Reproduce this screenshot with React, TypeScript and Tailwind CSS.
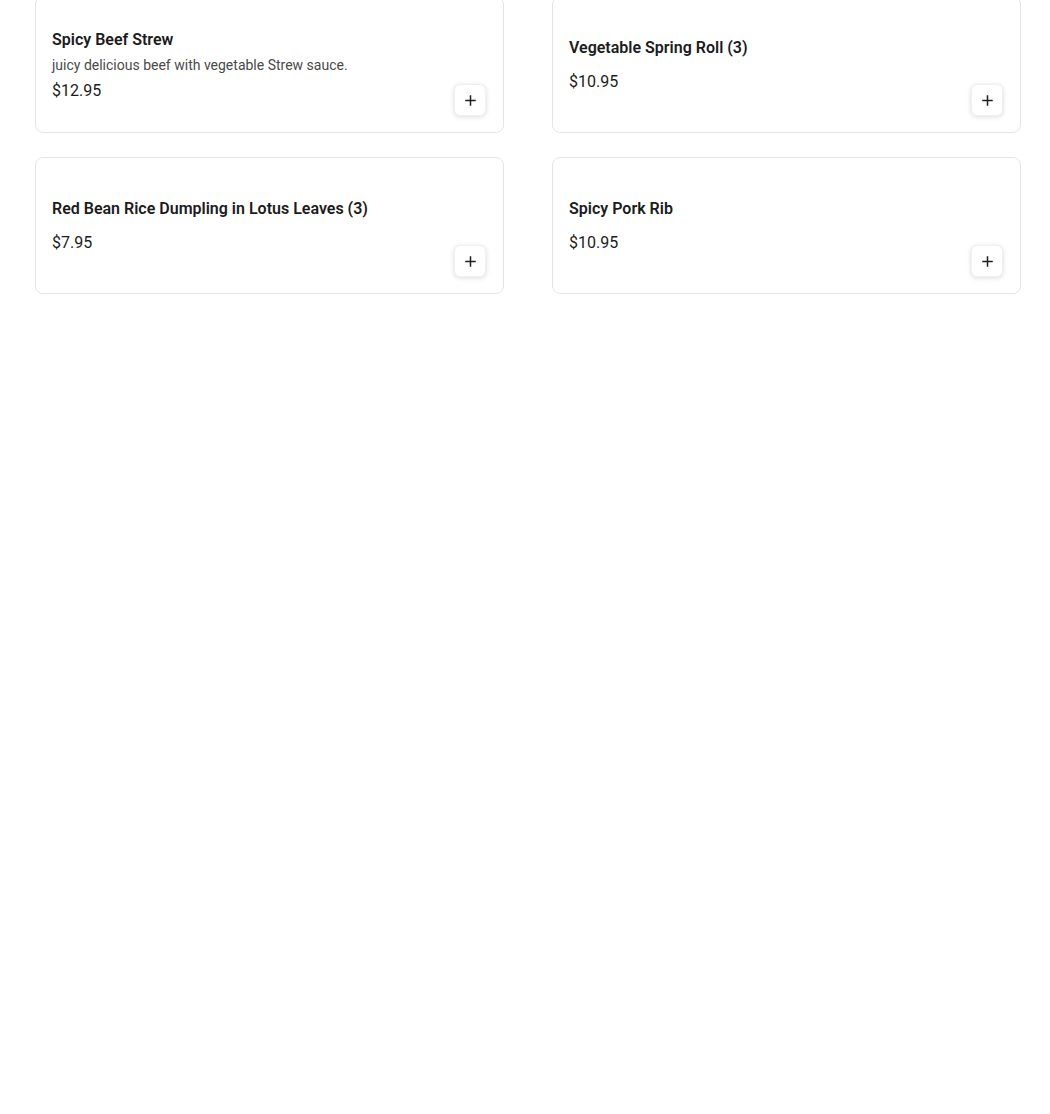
import React from 'react';

interface MenuItem {
  name: string;
  description?: string;
  price: string;
}

const items: MenuItem[] = [
  { name: 'Spicy Beef Strew', description: 'juicy delicious beef with vegetable Strew sauce.', price: '$12.95' },
  { name: 'Vegetable Spring Roll (3)', price: '$10.95' },
  { name: 'Red Bean Rice Dumpling in Lotus Leaves (3)', price: '$7.95' },
  { name: 'Spicy Pork Rib', price: '$10.95' },
];

const PlusIcon = () => (
  <svg width="11" height="11" viewBox="0 0 11 11" fill="none">
    <path d="M5.5 1v9M1 5.5h9" stroke="#1f1f1f" strokeWidth="1.5" strokeLinecap="square" />
  </svg>
);

const ItemCard: React.FC<{ item: MenuItem }> = ({ item }) => (
  <div className="flex h-[137px] justify-between rounded-lg border border-[#e5e5e5] bg-white p-4">
    {/* Text block, centered vertically */}
    <div className={`flex flex-col justify-center ${item.description ? 'pt-[2px]' : ''}`}>
      <h3 className="text-base leading-6 font-semibold text-[#1c1c1c]">{item.name}</h3>
      {item.description ? (
        <p className="mt-[3px] text-sm leading-5 text-[#4a4a4a]">{item.description}</p>
      ) : null}
      <p className={`${item.description ? 'mt-[4px]' : 'mt-[10px]'} text-base leading-6 text-[#1c1c1c]`}>
        {item.price}
      </p>
    </div>

    {/* Add button */}
    <button className="mr-px flex h-8 w-8 shrink-0 items-center justify-center self-end rounded-md border border-[#f0f0f0] bg-white shadow-[0_1px_5px_rgba(0,0,0,0.14)]">
      <PlusIcon />
    </button>
  </div>
);

export default function App() {
  return (
    <div className="min-h-[1114px] bg-white" style={{ fontFamily: 'Roboto, "Liberation Sans", sans-serif' }}>
      <div className="-mt-[4px] grid grid-cols-[469px_469px] gap-x-12 gap-y-6 pl-[35px]">
        {items.map((item, idx) => (
          <ItemCard key={idx} item={item} />
        ))}
      </div>
    </div>
  );
}
